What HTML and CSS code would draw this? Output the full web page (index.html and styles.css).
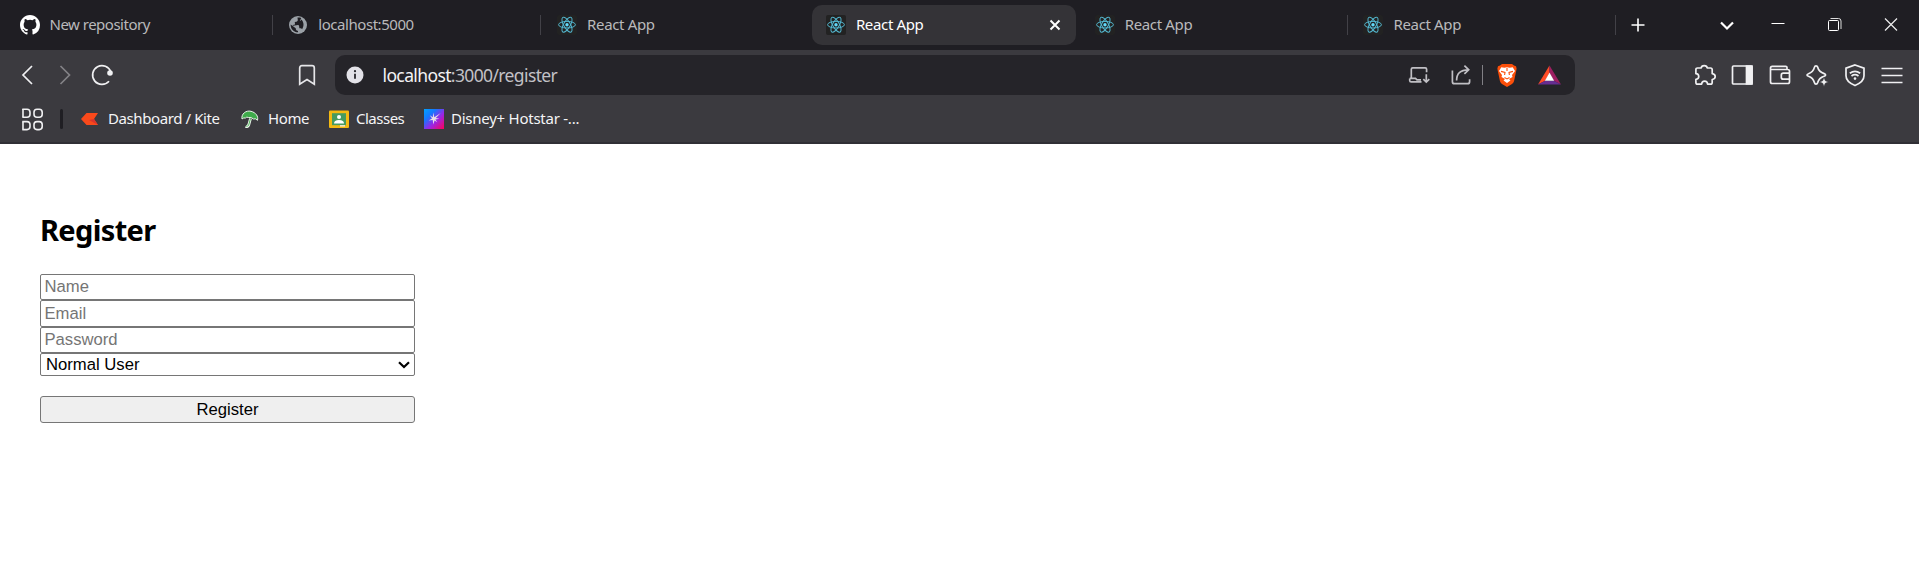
FILE: index.html
```html
<!DOCTYPE html>
<html lang="en">
<head>
<meta charset="utf-8">
<title>React App</title>
<link rel="stylesheet" href="styles.css">
</head>
<body>
<svg class="defs" aria-hidden="true">
  <symbol id="react" viewBox="0 0 20 20">
    <rect width="20" height="20" rx="2" fill="#222"/>
    <g fill="none" stroke="#53b6cf" stroke-width="1">
      <ellipse cx="10" cy="9.7" rx="8.4" ry="3.3"/>
      <ellipse cx="10" cy="9.7" rx="8.4" ry="3.3" transform="rotate(60 10 9.7)"/>
      <ellipse cx="10" cy="9.7" rx="8.4" ry="3.3" transform="rotate(120 10 9.7)"/>
    </g>
    <circle cx="10" cy="9.7" r="1.7" fill="#61dafb"/>
  </symbol>
</svg>

<header class="browser">
  <div class="tabstrip">
    <div class="tab ends">
      <svg class="favicon" viewBox="0 0 16 16"><path fill="#fff" d="M8 0C3.58 0 0 3.58 0 8c0 3.54 2.29 6.53 5.47 7.59.4.07.55-.17.55-.38 0-.19-.01-.82-.01-1.49-2.01.37-2.53-.49-2.69-.94-.09-.23-.48-.94-.82-1.13-.28-.15-.68-.52-.01-.53.63-.01 1.08.58 1.23.82.72 1.21 1.87.87 2.33.66.07-.52.28-.87.51-1.07-1.78-.2-3.64-.89-3.64-3.95 0-.87.31-1.59.82-2.15-.08-.2-.36-1.02.08-2.12 0 0 .67-.21 2.2.82a7.6 7.6 0 0 1 4 0c1.53-1.04 2.2-.82 2.2-.82.44 1.1.16 1.92.08 2.12.51.56.82 1.27.82 2.15 0 3.07-1.87 3.75-3.65 3.95.29.25.54.73.54 1.48 0 1.07-.01 1.93-.01 2.2 0 .21.15.46.55.38A8.01 8.01 0 0 0 16 8c0-4.42-3.58-8-8-8z"/></svg>
      <span class="title t-new">New repository</span>
    </div>
    <div class="tab ends">
      <svg class="favicon" viewBox="0 0 20 20"><circle cx="10" cy="10" r="9" fill="#9aa0a6"/><path fill="#1f1e23" d="M10.500 2.600v2.200c0 1-.8 1.700-1.700 1.700H7.200v1.800c0 .5-.4.9-.9.900H4.800V10h5.200c.5 0 .9.400.9.900v2.600h.9c.8 0 1.400.5 1.700 1.200 2.300-2.300 3-6.500.5-9.600-.2.700-.8 1.300-1.600 1.300l1.800-3C13 2.900 11.800 2.500 10.500 2.600zM9.100 17.300v-1.700c-1 0-1.800-.8-1.800-1.800v-.9L2.800 8.400c-.9 4.300 2.100 8.300 6.300 8.900z" transform="rotate(-8 10 10)"/></svg>
      <span class="title t-local">localhost:5000</span>
    </div>
    <div class="tab"><svg class="favicon"><use href="#react"/></svg><span class="title">React App</span></div>
    <div class="tab active"><svg class="favicon"><use href="#react"/></svg><span class="title">React App</span>
      <svg class="close" width="12" height="12"><path d="M1.500 1.500l9 9M10.500 1.500l-9 9" stroke="#fff" stroke-width="2" fill="none"/></svg></div>
    <div class="tab ends"><svg class="favicon"><use href="#react"/></svg><span class="title">React App</span></div>
    <div class="tab ends"><svg class="favicon"><use href="#react"/></svg><span class="title">React App</span></div>
    <svg class="newtab" width="14" height="14"><path d="M7 .5v13M.5 7h13" stroke="#fff" stroke-width="1.600"/></svg>
    <div class="window">
      <svg class="wbtn" viewBox="0 0 24 24"><path d="M6 9.500l6 6 6-6" fill="none" stroke="#fff" stroke-width="2.200"/></svg>
      <svg class="wbtn" viewBox="0 0 24 24"><path d="M5.500 10.500h13" stroke="#fff"/></svg>
      <svg class="wbtn" viewBox="0 0 24 24"><rect x="5.500" y="7.500" width="10" height="10" rx="1" fill="none" stroke="#fff"/><path d="M7.500 5.500h8q2.500 0 2.500 2.500v8" fill="none" stroke="#ddd"/></svg>
      <svg class="wbtn" viewBox="0 0 24 24"><path d="M6 5.500l12 12M18 5.500l-12 12" stroke="#eee" stroke-width="1.200"/></svg>
    </div>
  </div>

  <div class="toolbar">
    <div class="nav">
      <svg viewBox="0 0 24 24"><path d="M17 3l-9 9 9 9"/></svg>
      <svg class="dim" viewBox="0 0 24 24"><path d="M7.500 3l9 9-9 9"/></svg>
      <svg viewBox="0 0 24 24"><path d="M19 18.300A9.400 9.400 0 1 1 20.900 9"/><circle cx="20" cy="10" r="2.800" fill="#f0f0f2" stroke="none"/></svg>
    </div>
    <svg class="bookmark" viewBox="0 0 24 24"><path d="M4.700 21.200V5q0-2.300 2.300-2.300h10q2.300 0 2.300 2.300v16.200l-7.300-4.600z"/></svg>
    <div class="address">
      <svg class="info" viewBox="0 0 18 18"><circle cx="9" cy="9" r="8.500" fill="#e3e2e8"/><path d="M9 7.700v5" stroke="#252429" stroke-width="1.800"/><circle cx="9" cy="5.200" r="1.100" fill="#252429"/></svg>
      <div class="url"><span class="host">localhost</span>:3000/register</div>
      <svg class="install" viewBox="0 0 24 24"><path d="M4.300 14.600V6.200q0-1.400 1.400-1.400h12.500q1.400 0 1.400 1.400v3M2.700 15.400h5.800l1.500 1.400h4M2.700 15.400v2q0 1.500 1.500 1.500H14.500M19.300 11.300v7.500M16.300 16.200l3 2.900 3-2.900"/></svg>
      <svg class="share" viewBox="0 0 24 24"><path d="M3.400 7.500v11.200q0 2 2 2h13.200q2 0 2-2v-2.400M7.600 17.600c0-7 3.400-10.800 11.600-10.800M15.400 2.700l4.300 4.100-4.300 4.100"/></svg>
      <span class="rule"></span>
      <svg class="shield" viewBox="0 0 24 26"><path d="M7 2h10l2 1.600 2 .6.600 2.300-.3 2-2.300 10.700q-.5 1.700-2 2.700L12 25l-5-3.100q-1.500-1-2-2.700L2.700 8.500l-.3-2L3 4.200l2-.6z" fill="#fb4f0a"/><path d="M6.300 5.300l3 .5L12 5.300l2.700.5 3-.5 2.300 3.600-3 4 .5 2-3.500 2.100 1.500 1.400-3.500 2.600-3.500-2.600 1.500-1.400-3.500-2.100.5-2-3-4z" fill="#fff"/><path d="M6 9.400l4 1-.4 2.600M18 9.400l-4 1 .4 2.600M9.500 15.600l2.500 1.300 2.500-1.300M12 6v3" fill="none" stroke="#fb4f0a" stroke-width="1.100"/></svg>
      <svg class="bat" viewBox="0 0 24 20"><path d="M12 0v8L7.500 16 0 20z" fill="#ff4b26"/><path d="M12 0l12 20-7.500-4L12 8z" fill="#9e1f63"/><path d="M0 20l7.500-4h9L24 20z" fill="#662d91"/><path d="M12 7.500l4.800 8.500H7.200z" fill="#fff"/></svg>
    </div>
    <div class="actions">
      <svg viewBox="0 0 24 24"><path stroke-linejoin="round" d="M4.500 5H8.200c.3-3.300 5.700-3.300 6 0h3.300q1.700 0 1.700 1.700v4c4 .4 4 5.400 0 5.800v3q0 1.700-1.700 1.700h-2.900c-.3-4-5.700-4-6 0H4.600q-1.700 0-1.700-1.700v-3.200c3.800-.3 3.800-5.300 0-5.600V6.600Q2.900 5 4.500 5z"/></svg>
      <svg viewBox="0 0 24 24"><rect x="2.500" y="3" width="19.500" height="18" rx="1"/><path d="M16.500 3H22v18h-5.500z" fill="#f0f0f2"/></svg>
      <svg viewBox="0 0 24 24"><path d="M19 6.500V4.600q0-1.300-1.300-1.300H4.300Q2.500 3.300 2.500 5v13.700q0 1.800 1.800 1.800h15.500q1.700 0 1.700-1.800V8.300q0-1.800-1.700-1.800H2.800M21.500 10.200H15.300q-2 0-2 2v2q0 2 2 2h6.200"/></svg>
      <svg viewBox="0 0 24 24"><path d="M11 2.800Q12.300 2.800 12.600 4q1.300 5 6.600 6.600 1.400.5 1.400 1.400t-1.400 1.200q-5.300 1.500-6.600 6.600-.4 1.400-1.600 1.400t-1.500-1.400q-1.300-5.100-6-6.600Q2 12.800 2 12t1.500-1.300q4.700-1.600 6-6.600.3-1.300 1.500-1.300z"/><path d="M19 14.500l1.300 3.200L23.500 19l-3.200 1.300L19 23.500l-1.300-3.200L14.500 19l3.200-1.300z" class="cut"/></svg>
      <svg viewBox="0 0 24 24"><path d="M12 2l9 3.200v7.600c0 4.500-4 7.700-9 9.700-5-2-9-5.200-9-9.700V5.200z"/><path d="M6.800 10.200q5.200-3.800 10.400 0M8.500 13q3.500-2.600 7 0"/><circle cx="12" cy="15.600" r="1.300" fill="#f0f0f2" stroke="none"/></svg>
      <svg viewBox="0 0 24 24"><path d="M1.500 5.500h21M1.500 12.500h21M1.500 19.500h21"/></svg>
    </div>
  </div>

  <div class="bookmarks">
    <svg class="apps" width="22" height="23" viewBox="0 0 22 23"><g fill="none" stroke="#f0f0f2" stroke-width="1.600"><path d="M.3 1.200H5q3 0 3 3v2q0 3-3 3H.3M.3 13.600H5q3 0 3 3v2q0 3-3 3H.3"/><path d="M1 1v8M1 13.500v8"/><rect x="12" y="1.200" width="8.200" height="8" rx="3"/><rect x="12" y="13.600" width="8.200" height="8" rx="3"/></g></svg>
    <span class="divider"></span>
    <a class="link b-kite"><svg viewBox="0 0 20 20"><path d="M6.500 4H18l-4 6 4 6H6.500L1 10z" fill="#f9491b"/><path d="M9 11l5-1 4 6z" fill="#db342c"/></svg><span>Dashboard / Kite</span></a>
    <a class="link b-home"><svg viewBox="0 0 20 20"><path d="M2 10C1 5 6 1 11 2.300s7.500 5 6.500 9q-2-2.300-4-1.300-2-2-5-1.500-2-1-3 .5-2-.5-3.500 1z" fill="#3fab4b" stroke="#e8f4e8" stroke-width="1"/><path d="M10.500 9.500l-1.800 6.500q-1 2.500-3 1.300" fill="none" stroke="#eef6ee" stroke-width="2.800"/><path d="M10.500 9.500l-1.800 6.500q-1 2-2.600 1" fill="none" stroke="#3fab4b" stroke-width=".9"/></svg><span>Home</span></a>
    <a class="link b-class"><svg viewBox="0 0 20 20"><rect y="1.500" width="20" height="17.500" rx="1" fill="#f4b912"/><rect x="3" y="4.200" width="14" height="12" fill="#479b5f"/><circle cx="10" cy="8" r="2" fill="#fff"/><path d="M5 14.500q0-3.500 5-3.500t5 3.500z" fill="#fff"/><path d="M11 16.200h5V17.500h-5z" fill="#f1f1f1"/></svg><span>Classes</span></a>
    <a class="link b-star"><svg viewBox="0 0 20 20"><defs><linearGradient id="hs" x2="1" y2="1"><stop stop-color="#00a2ff"/><stop offset=".3" stop-color="#1677ff"/><stop offset=".6" stop-color="#9b25e6"/><stop offset="1" stop-color="#ff0057"/></linearGradient></defs><path d="M0 0h20v20H0z" fill="url(#hs)"/><path d="M9.300 3.500l1 4.800 6.400-4.300-4.900 5 3.600.8-4 .6 1.900 2.900-2.800-1.900-1.200 4.100-.6-4.400-4 .5 3.300-2-2.200-3.300 3 1.900z" fill="#e9dfe8"/></svg><span>Disney+ Hotstar -...</span></a>
  </div>
</header>

<main class="page">
  <h2>Register</h2>
  <form class="form">
    <input class="field" type="text" placeholder="Name">
    <input class="field tall" type="email" placeholder="Email">
    <input class="field" type="password" placeholder="Password">
    <div class="picker">
      <select class="role"><option>Normal User</option></select>
      <svg class="caret" width="12" height="8"><path d="M1 1.200l5 4.800 5-4.800" fill="none" stroke="#000" stroke-width="2.200"/></svg>
    </div>
    <button class="submit" type="button">Register</button>
  </form>
</main>
</body>
</html>
```

FILE: styles.css
```css
* { box-sizing: border-box; }
body { margin: 0; background: #fff; font-family: "Noto Sans", "Open Sans", sans-serif; overflow: hidden; }
svg { display: block; flex: none; }
.defs { position: absolute; width: 0; height: 0; }

.browser { height: 144px; background: #3b3a3f; border-bottom: 2px solid #302f35; }

.tabstrip { height: 50px; display: flex; align-items: center; gap: 4.800px; padding-left: 5.500px; background: #1f1e23; }
.tab { position: relative; flex: none; width: 264px; height: 40px; display: flex; align-items: center; padding: 0 15px 0 14px; border-radius: 10px; color: #b9b9bb; }
.ends::after { content: ""; position: absolute; right: -3px; top: 10px; width: 1px; height: 20px; background: #424147; }
.active { background: #343337; color: #fff; }
.favicon { width: 20px; height: 20px; }
.title { margin-left: 10px; padding-bottom: 2px; font-size: 15px; line-height: 20px; letter-spacing: -0.350px; white-space: nowrap; }
.t-new { letter-spacing: -0.500px; }
.t-local { letter-spacing: -0.450px; }
.close { margin-left: auto; }
.newtab { margin-left: 13px; }
.window { margin-left: auto; display: flex; padding-right: 16px; }
.wbtn { width: 24px; height: 24px; }
.wbtn + .wbtn { margin-left: 32.500px; }
.wbtn:nth-child(2) { margin-left: 27.500px; }

.toolbar { height: 50px; display: flex; align-items: center; padding-left: 8.700px; }
.nav, .actions { display: flex; }
.nav svg, .actions svg { width: 24px; height: 24px; margin: 0 6.750px; fill: none; stroke: #f0f0f2; stroke-width: 1.700; }
.nav .dim { stroke: #838286; }
.actions .cut { fill: #f0f0f2; stroke: #3b3a3f; stroke-width: .6; }
.bookmark { width: 24px; height: 24px; margin-left: 173.500px; fill: none; stroke: #e6e6e9; stroke-width: 1.700; }
.address { width: 1240px; height: 40px; margin-left: 16.300px; margin-right: 111px; flex: none; display: flex; align-items: center; padding: 0 14px 0 11px; border-radius: 10px; background: #252429; }
.info { width: 18px; height: 18px; }
.url { flex: 1; margin-left: 18.500px; padding-bottom: 1px; font-size: 17.500px; letter-spacing: -0.620px; line-height: 24px; color: #c2c1c6; }
.host { color: #f3f3f5; }
.install, .share { width: 24px; height: 24px; fill: none; stroke: #c0bfc4; stroke-width: 1.700; }
.share { margin-left: 18px; }
.rule { width: 1px; height: 20px; margin-left: 9px; background: #818085; }
.shield { width: 24px; height: 26px; margin-left: 12.500px; }
.bat { width: 23px; height: 20px; margin-left: 18.500px; }

.bookmarks { height: 40px; display: flex; align-items: center; padding-left: 22px; padding-bottom: 2px; color: #f4f4f6; }
.divider { width: 3px; height: 20px; margin-left: 16px; border-radius: 2px; background: #1f1e23; }
.link { display: flex; align-items: center; gap: 8px; font-size: 15px; line-height: 20px; white-space: nowrap; letter-spacing: -0.400px; }
.link span { padding-bottom: 2px; }
.link svg { width: 20px; height: 20px; }
.b-kite { width: 160px; margin-left: 17px; }
.b-home { width: 89px; }
.b-class { width: 95px; gap: 7px; letter-spacing: -0.500px; }
.b-star { gap: 7px; letter-spacing: -0.250px; }

.page { padding: 66px 40px 0; }
.page h2 { margin: 0; height: 64px; font-size: 29px; line-height: 40px; font-weight: 700; letter-spacing: -0.650px; }
.form { width: 375px; display: flex; flex-direction: column; }
.field, .role, .submit { width: 100%; margin: 0; border: 1px solid #767676; border-radius: 2px; font: 16.670px/19px "Liberation Sans", Arial, sans-serif; color: #000; }
.field { height: 26px; padding: 1px 3.500px; background: #fff; }
.field::placeholder { color: #757575; }
.tall { height: 27px; }
.picker { position: relative; height: 23px; }
.role { display: block; height: 23px; padding: 0 5px; appearance: none; background: #fff; }
.caret { position: absolute; right: 5px; top: 8px; }
.submit { height: 27px; margin-top: 20px; padding: 0; border-radius: 3px; background: #efefef; }
```
